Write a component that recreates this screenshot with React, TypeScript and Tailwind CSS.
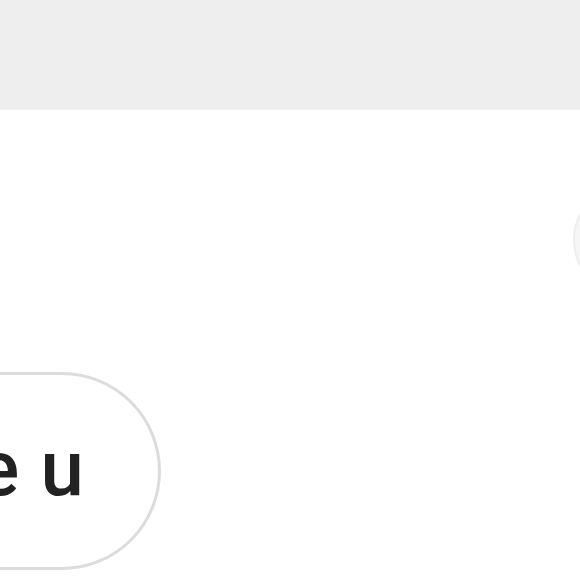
import React from "react";

export default function App() {
  return (
    <div className="w-[580px] h-[580px] overflow-hidden bg-white font-['Roboto',sans-serif]">
      {/* top bar */}
      <div className="h-[110px] bg-[#eeeeee] border-b border-[#f2f2f2]" />

      {/* right circle */}
      <div className="flex justify-end h-[262px] pt-[75px]">
        <div className="w-[110px] h-[110px] shrink-0 -mr-[103px] rounded-full bg-[#f6f6f6] border-2 border-[#eeeeee]" />
      </div>

      {/* pill */}
      <div className="flex">
        <div className="-ml-[120px] h-[198px] w-[281px] shrink-0 rounded-full border-[3px] border-[#dcdcdc] flex items-center justify-end pr-[73px]">
          <span className="text-[78px] font-medium text-[#222222] leading-none pb-[4px] tracking-[1px]">e u</span>
        </div>
      </div>
    </div>
  );
}
